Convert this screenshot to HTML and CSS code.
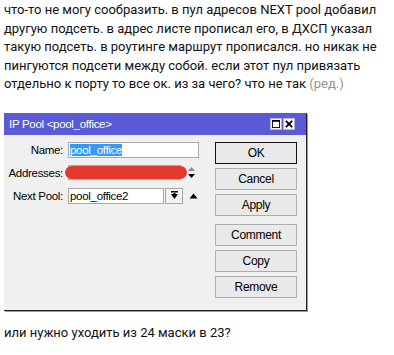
FILE: index.html
```html
<!DOCTYPE html>
<html lang="ru">
<head>
    <meta charset="UTF-8">
    <meta name="viewport" content="width=device-width, initial-scale=1.0">
    <title>IP Pool</title>
    <link rel="stylesheet" href="styles.css">
</head>
<body>
    <!-- Post text -->
    <p class="post">что-то не могу сообразить. в пул адресов NEXT pool добавил другую подсеть. в адрес листе прописал его, в ДХСП указал такую подсеть. в роутинге маршрут прописался. но никак не пингуются подсети между собой. если этот пул привязать отдельно к порту то все ок. из за чего? что не так <span class="edited">(ред.)</span></p>

    <!-- Winbox window screenshot -->
    <div class="window">
        <div class="titlebar">
            <span class="title">IP Pool &lt;pool_office&gt;</span>
            <div class="tb-buttons">
                <span class="tb-btn">
                    <svg width="8" height="8" viewBox="0 0 9 9"><rect x="0.5" y="0.5" width="8" height="8" fill="none" stroke="#000"/><rect x="0" y="0" width="9" height="2" fill="#000"/></svg>
                </span>
                <span class="tb-btn">
                    <svg width="8" height="8" viewBox="0 0 9 9"><path d="M1 1 L8 8 M8 1 L1 8" stroke="#000" stroke-width="2"/></svg>
                </span>
            </div>
        </div>

        <div class="win-body">
            <div class="form">
                <label class="label">Name:</label>
                <div class="field">
                    <span class="input name-input"><span class="selected">pool_office</span></span>
                </div>

                <label class="label">Addresses:</label>
                <div class="field">
                    <span class="input addr-input"></span>
                    <span class="spinner">
                        <svg width="9" height="13" viewBox="0 0 9 13"><path d="M1 5 L4.5 1 L8 5 Z" fill="#8a8a8a"/><path d="M1 8 L4.5 12 L8 8 Z" fill="#000"/></svg>
                    </span>
                    <span class="scribble"></span>
                </div>

                <label class="label">Next Pool:</label>
                <div class="field">
                    <span class="input pool-input">pool_office2</span>
                    <span class="drop-btn">
                        <svg width="9" height="9" viewBox="0 0 9 9"><rect x="1" y="0" width="7" height="1.5" fill="#000"/><path d="M1 3 L8 3 L4.5 8 Z" fill="#000"/><rect x="3.5" y="2" width="2" height="2" fill="#000"/></svg>
                    </span>
                    <span class="up-arrow">
                        <svg width="9" height="6" viewBox="0 0 9 6"><path d="M0.5 5.5 L4.5 0.5 L8.5 5.5 Z" fill="#000"/></svg>
                    </span>
                </div>
            </div>

            <div class="actions">
                <div class="btn default">OK</div>
                <div class="btn">Cancel</div>
                <div class="btn">Apply</div>
                <div class="btn spaced">Comment</div>
                <div class="btn">Copy</div>
                <div class="btn">Remove</div>
            </div>
        </div>
    </div>

    <p class="post bottom">или нужно уходить из 24 маски в 23?</p>
</body>
</html>
```

FILE: styles.css
```css
html, body {
    margin: 0;
    background-color: #fff;
}

body {
    font-family: Roboto, "Liberation Sans", sans-serif;
    color: #000;
}

/* Post text */
.post {
    margin: 0;
    padding: 1px 4px 0 4px;
    width: 380px;
    font-size: 13px;
    line-height: 18.5px;
    color: #111;
}

.edited {
    color: #939393;
}

.post.bottom {
    margin-top: 13px;
    padding-top: 0;
}

/* Window */
.window {
    margin: 19px 0 0 4px;
    width: 302px;
    background-color: #f0f0f0;
    border-right: 1px solid #222;
    border-bottom: 1px solid #222;
    box-shadow: 1px 1px 0 #9a9a9a;
    font-family: "Liberation Sans", Arial, sans-serif;
    font-size: 11.5px;
    letter-spacing: -0.3px;
}

.titlebar {
    height: 22px;
    background-color: #5a5ad6;
    display: flex;
    align-items: center;
    padding: 0 11px 0 5px;
}

.title {
    color: #fff;
    font-size: 11.5px;
    letter-spacing: -0.3px;
    flex: 1;
}

.tb-buttons {
    display: flex;
    gap: 1px;
}

.tb-btn {
    width: 12px;
    height: 12px;
    background-color: #f4f4f4;
    border: 1px solid #b8b8c8;
    box-sizing: border-box;
    display: flex;
    justify-content: center;
    align-items: center;
}

.win-body {
    display: flex;
    padding: 7px 9px 12px 0;
}

/* Form */
.form {
    width: 207px;
    display: grid;
    grid-template-columns: 59px 1fr;
    grid-auto-rows: 16px;
    column-gap: 5px;
    row-gap: 7px;
    align-content: start;
}

.label {
    text-align: right;
    line-height: 16px;
    color: #000;
    white-space: nowrap;
}

.field {
    display: flex;
    align-items: center;
    position: relative;
}

.input {
    height: 16px;
    box-sizing: border-box;
    background-color: #fff;
    border: 1px solid #a8a8a8;
    line-height: 14px;
    padding: 0 1px;
    white-space: nowrap;
}

.name-input {
    width: 131px;
}

.selected {
    background-color: #3399ff;
    color: #fff;
}

.addr-input {
    width: 113px;
    height: 15px;
}

.spinner {
    margin-left: 6px;
    display: flex;
}

/* red marker stroke over the address value */
.scribble {
    position: absolute;
    left: -3px;
    top: 1px;
    width: 122px;
    height: 13px;
    border-radius: 7px;
    background-color: #e3392f;
}

.pool-input {
    width: 96px;
}

.drop-btn {
    width: 18px;
    height: 16px;
    box-sizing: border-box;
    border: 1px solid #a8a8a8;
    background-color: #f4f4f4;
    margin-left: 1px;
    display: flex;
    justify-content: center;
    align-items: center;
}

.up-arrow {
    margin-left: 6px;
    display: flex;
}

/* Buttons */
.actions {
    margin-left: auto;
    width: 82px;
    display: flex;
    flex-direction: column;
    gap: 4px;
}

.btn {
    height: 22px;
    box-sizing: border-box;
    border: 1px solid #adadad;
    background-color: #e9e9e9;
    text-align: center;
    line-height: 20px;
    font-size: 12px;
    letter-spacing: -0.3px;
}

.btn.default {
    border-color: #111;
}

.btn.spaced {
    margin-top: 4px;
}
```
